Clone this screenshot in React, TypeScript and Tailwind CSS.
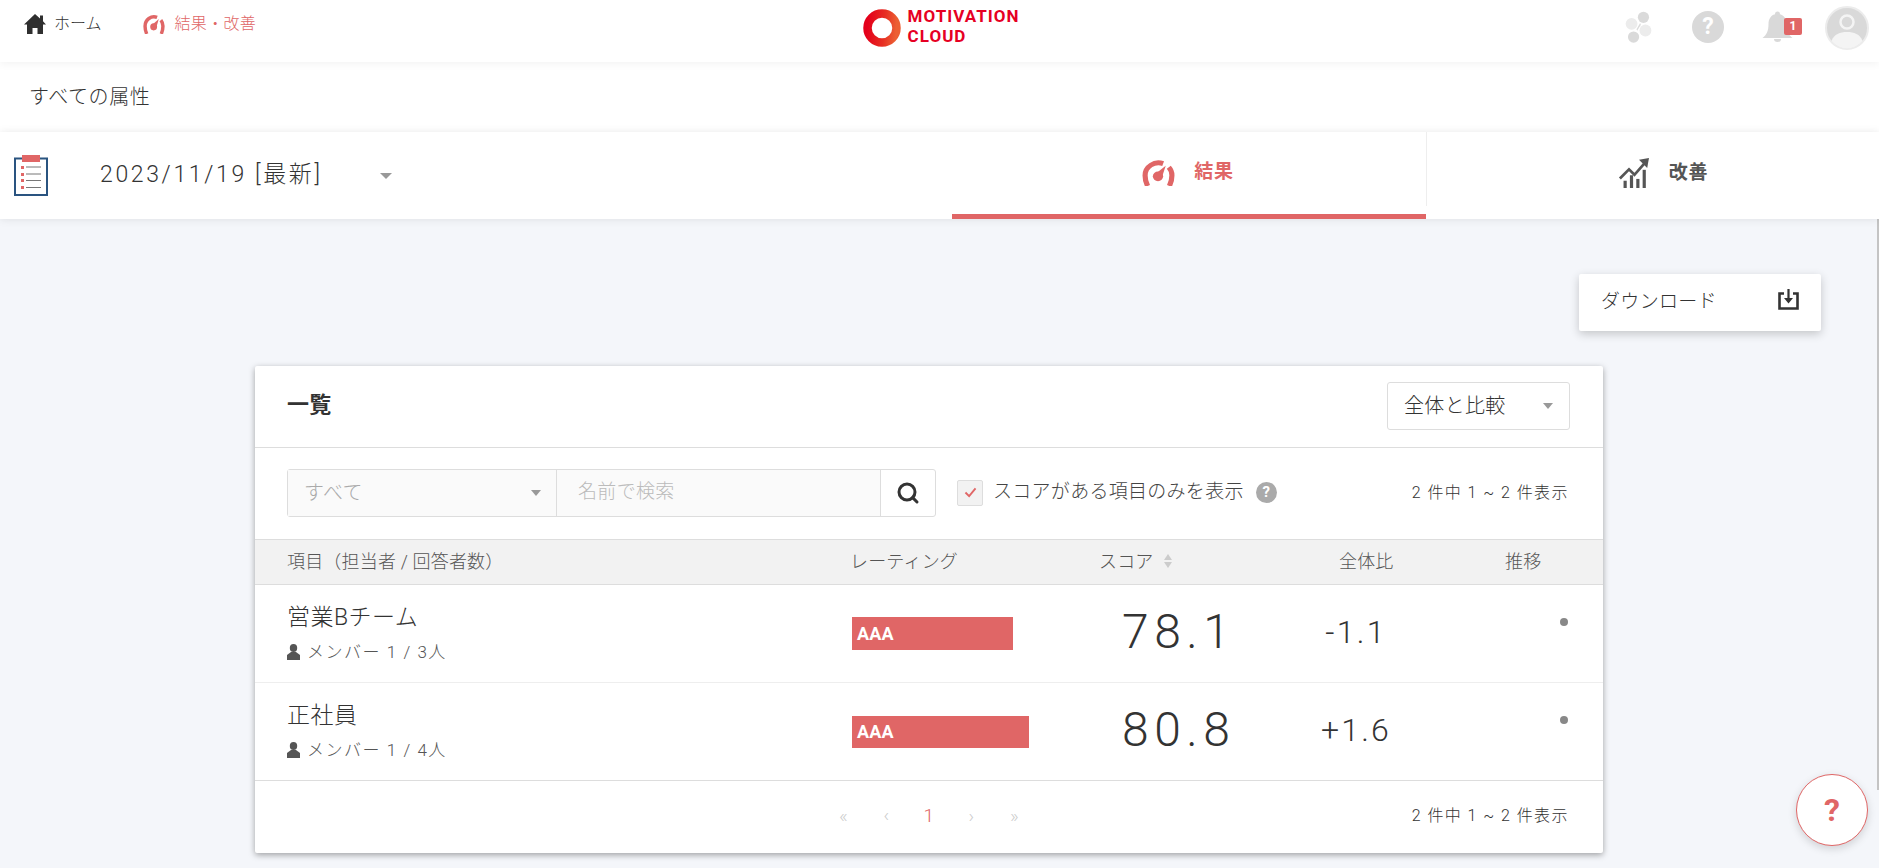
import React from "react";
import { Search } from "lucide-react";

const Gauge = ({ className, color }: { className?: string; color: string }) => (
  <svg viewBox="0 0 32 28" preserveAspectRatio="none" className={className}>
    <path d="M5.500 28 C3.500 24 3 20 3 17 A13 13 0 0 1 20.500 4.800" fill="none" stroke={color} strokeWidth="5" />
    <path d="M26 8.500 A13 13 0 0 1 29 17 C29 20 28.500 24 26.500 28" fill="none" stroke={color} strokeWidth="5" />
    <circle cx="15.500" cy="18" r="5" fill={color} />
    <path d="M13.500 15 L23 7 L19 20 z" fill={color} />
  </svg>
);

const Home = () => (
  <svg viewBox="0 0 22 20" className="w-[22px] h-[20px]">
    <path d="M11 0 L16 4.500 V1.500 H19 V7.200 L22 10.500 L19 10.500 V20 H13.500 V14 H8.500 V20 H3 V10.500 L0 10.500 z" fill="#2f2f2f" />
  </svg>
);

const Molecule = () => (
  <svg viewBox="0 0 80 97" className="w-[27px] h-[32px]">
    <circle cx="55" cy="19" r="17" fill="#dadada" />
    <circle cx="19" cy="39" r="18" fill="#ececec" />
    <circle cx="61" cy="59" r="18" fill="#ececec" />
    <circle cx="25" cy="79" r="17" fill="#dadada" />
    <path d="M34 55 L45 36 L47 42 L36 60 z" fill="#dadada" />
  </svg>
);

const Bell = () => (
  <svg viewBox="0 0 31 31" className="w-[31px] h-[31px]">
    <circle cx="15.500" cy="3" r="2.500" fill="#d9d9d9" />
    <path d="M15.500 3 C9 3 6.500 8 6.500 13 C6.500 20 4.500 24 0.500 27 H30.500 C26.500 24 24.500 20 24.500 13 C24.500 8 22 3 15.500 3 z" fill="#d9d9d9" />
    <path d="M12 28 H19 A3.500 3 0 0 1 12 28 z" fill="#d9d9d9" />
  </svg>
);

const Avatar = () => (
  <svg viewBox="0 0 44 44" className="w-[44px] h-[44px]">
    <circle cx="22" cy="22" r="21" fill="#d9d9d9" stroke="#ececec" strokeWidth="2" />
    <circle cx="22" cy="16" r="6.500" fill="none" stroke="#f4f4f4" strokeWidth="2.500" />
    <path d="M6.500 35 C9 28 15 26 22 26 C29 26 35 28 37.500 35 A20 20 0 0 1 6.500 35 z" fill="#f4f4f4" />
  </svg>
);

const Clipboard = () => (
  <svg viewBox="0 0 34 41" className="w-[34px] h-[41px]">
    <rect x="1" y="3.500" width="32" height="36.500" fill="#fff" stroke="#2a5480" strokeWidth="2" />
    <rect x="8" y="0" width="18" height="7" fill="#e06666" />
    <g fill="#e06666">
      <rect x="7" y="11" width="3" height="3" />
      <rect x="7" y="18" width="3" height="3" />
      <rect x="7" y="24" width="3" height="3" />
      <rect x="7" y="31" width="3" height="3" />
    </g>
    <g stroke="#777" strokeWidth="1">
      <path d="M12 12 H27" />
      <path d="M12 19 H27" />
      <path d="M12 25.500 H27" />
      <path d="M12 32.500 H27" />
    </g>
  </svg>
);

const ChartUp = () => (
  <svg viewBox="0 0 33 33" className="w-[32px] h-[30px]">
    <g fill="#555">
      <rect x="5" y="25" width="3.500" height="8" />
      <rect x="12" y="19" width="3.500" height="14" />
      <rect x="19" y="23" width="3.500" height="10" />
      <rect x="26" y="13" width="3.500" height="20" />
      <path d="M22 2 L33 0 L31 11 z" />
    </g>
    <path d="M1 22.500 L11 12.500 L17 18.500 L28 6" fill="none" stroke="#555" strokeWidth="3" />
  </svg>
);

const DownloadIcon = () => (
  <svg viewBox="0 0 21 21" className="w-[21px] h-[21px] mb-[7px]">
    <path d="M6 4.500 H1.500 V19.500 H19.500 V4.500 H15" fill="none" stroke="#333" strokeWidth="2.600" />
    <path d="M9.400 0 H11.600 V9 H15 L10.500 14.500 L6 9 H9.400 z" fill="#333" />
  </svg>
);

const Person = () => (
  <svg viewBox="0 0 13 16" className="w-[13px] h-[16px] shrink-0">
    <ellipse cx="6.500" cy="4" rx="3.700" ry="4" fill="#555" />
    <path d="M4 8 H9 L13 11 V16 H0 V11 z" fill="#555" />
  </svg>
);

const CaretLarge = ({ className }: { className?: string }) => (
  <div className={`w-0 h-0 border-l-[6px] border-r-[6px] border-t-[6px] border-l-transparent border-r-transparent border-t-[#999] ${className ?? ""}`} />
);

const Caret = () => (
  <div className="w-0 h-0 border-l-[5px] border-r-[5px] border-t-[6px] border-l-transparent border-r-transparent border-t-[#999]" />
);

const rows = [
  { name: "営業Bチーム", sub: "メンバー 1 / 3人", barClass: "w-[161px] h-[33px]", score: "78.1", diff: "-1.1" },
  { name: "正社員", sub: "メンバー 1 / 4人", barClass: "w-[177px] h-[32px]", score: "80.8", diff: "+1.6" },
];

export default function App() {
  return (
    <div className="relative h-[868px] overflow-hidden bg-[#f4f6fa] text-[#333] font-light tracking-[0.02em] font-['Roboto','Noto_Sans_CJK_JP',sans-serif]">
      {/* top nav */}
      <header className="relative z-20 h-[62px] bg-white shadow-[0_2px_8px_rgba(0,0,0,0.05)] flex items-start">
        <div className="flex-1 flex items-center h-[47px] pl-[24px]">
          <Home />
          <span className="ml-[8px] text-[16px] tracking-normal">ホーム</span>
          <Gauge className="ml-[41px] w-[22px] h-[20px]" color="#e06666" />
          <span className="ml-[10px] text-[16px] tracking-[0.02em] text-[#e06666]">結果・改善</span>
        </div>
        <div className="flex items-center gap-[7px] pt-[6px] pr-[11px]">
          <svg viewBox="0 0 38 38" className="w-[38px] h-[38px]">
            <defs>
              <linearGradient id="ring" x1="0" y1="0.3" x2="1" y2="0.4">
                <stop offset="0" stopColor="#e4001b" />
                <stop offset="0.6" stopColor="#e72f22" />
                <stop offset="1" stopColor="#ec5f33" />
              </linearGradient>
            </defs>
            <circle cx="19" cy="19" r="14.500" fill="none" stroke="url(#ring)" strokeWidth="8.500" />
          </svg>
          <div className="text-[#e60023] font-bold text-[17px] leading-[20px] tracking-[0.06em] pb-[4px] font-['Roboto',sans-serif]">
            <div>MOTIVATION</div>
            <div>CLOUD</div>
          </div>
        </div>
        <div className="flex-1 flex justify-end pt-[6px] pr-[10px]">
          <div className="mt-[5px]"><Molecule /></div>
          <div className="ml-[40px] mt-[5px] w-[32px] h-[32px] rounded-full bg-[#d9d9d9] text-white font-bold text-[23px] leading-[32px] text-center tracking-normal">?</div>
          <div className="relative ml-[38px] mt-[5px] w-[31px]">
            <Bell />
            <span className="absolute left-[22px] top-[7px] w-[18px] h-[17px] rounded-[2px] bg-[#e06666] text-white text-[12px] font-bold leading-[17px] text-center tracking-normal">1</span>
          </div>
          <div className="ml-[32px]"><Avatar /></div>
        </div>
      </header>

      {/* attribute bar */}
      <div className="h-[70px] bg-white flex items-center pl-[29px] text-[20px] tracking-[0.03em]">すべての属性</div>

      {/* tab bar */}
      <div className="relative z-10 h-[87px] bg-white shadow-[0_-2px_8px_rgba(0,0,0,0.04),0_2px_8px_rgba(0,0,0,0.06)] flex">
        <div className="w-[952px] flex items-center pl-[14px]">
          <Clipboard />
          <span className="ml-[52px] text-[23px] tracking-[0.115em]">2023/11/19 [最新]</span>
          <CaretLarge className="ml-[57px]" />
        </div>
        <div className="w-[474px] border-b-[5px] border-[#e06666] flex items-center justify-center gap-[19px] text-[#e06666] font-bold text-[19px] tracking-[0.04em] pb-[2px]">
          <Gauge className="w-[33px] h-[27px] -ml-[2px]" color="#e06666" />
          <span>結果</span>
        </div>
        <div className="w-px h-[74px] bg-[#eee]" />
        <div className="flex-1 flex items-center justify-center gap-[19px] text-[#555] font-bold text-[19px] tracking-[0.04em] pl-[20px] pb-[5px]">
          <ChartUp />
          <span>改善</span>
        </div>
      </div>

      {/* download */}
      <div className="flex justify-end pr-[58px] pt-[55px]">
        <div className="w-[242px] h-[57px] bg-white rounded-[2px] shadow-[0_3px_10px_rgba(0,0,0,0.2)] flex items-center justify-between pl-[22px] pr-[22px]">
          <span className="text-[19px]">ダウンロード</span>
          <DownloadIcon />
        </div>
      </div>

      {/* card */}
      <section className="ml-[255px] mt-[35px] w-[1348px] h-[487px] bg-white shadow-[0_2px_6px_rgba(0,0,0,0.35)] rounded-[2px] flex flex-col">
        <div className="h-[82px] border-b border-[#ddd] flex items-center justify-between pl-[32px] pr-[33px] pb-[2px] shrink-0">
          <h2 className="text-[22px] font-bold pb-[2px]">一覧</h2>
          <div className="w-[183px] h-[48px] rounded-[3px] border border-[#ddd] flex items-center justify-between pl-[16px] pr-[16px]">
            <span className="text-[20px]">全体と比較</span>
            <Caret />
          </div>
        </div>

        <div className="h-[92px] flex items-center pl-[32px] pr-[34px] pb-[2px] shrink-0 border-b border-[#ddd]">
          <div className="flex h-[48px] w-[649px] rounded-[3px] border border-[#ddd]">
            <div className="w-[269px] bg-[#fafafa] border-r border-[#ddd] flex items-center justify-between pl-[16px] pr-[15px] text-[20px] text-[#aaa]">
              <span>すべて</span>
              <Caret />
            </div>
            <div className="w-[323px] bg-[#fafafa] flex items-center pl-[21px] text-[19px] text-[#bbb]">名前で検索</div>
            <div className="flex-1 border-l border-[#ddd] flex items-center justify-center">
              <Search size={24} strokeWidth={3} color="#333" />
            </div>
          </div>
          <div className="ml-[21px] w-[26px] h-[26px] rounded-[2px] border border-[#ddd] bg-[#f2f2f2] flex items-center justify-center">
            <svg viewBox="0 0 14 12" className="w-[13px] h-[11px]">
              <path d="M1.500 6 L5.500 10 L12.500 1.500" fill="none" stroke="#e06666" strokeWidth="2" />
            </svg>
          </div>
          <span className="ml-[10px] text-[19px] tracking-[0.015em] text-[#444]">スコアがある項目のみを表示</span>
          <div className="ml-[12px] w-[21px] h-[21px] rounded-full bg-[#aaa] text-white text-[15px] font-bold leading-[21px] text-center tracking-normal">?</div>
          <span className="ml-auto text-[16px] tracking-[0.09em]">2 件中 1 ~ 2 件表示</span>
        </div>

        <div className="h-[45px] bg-[#f2f2f2] border-b border-[#ddd] shrink-0 grid grid-cols-[563px_249px_240px_166px_1fr] items-center pl-[32px] pb-[2px] text-[18px] tracking-[0.01em] text-[#555]">
          <div>項目（担当者 / 回答者数）</div>
          <div>レーティング</div>
          <div className="flex items-center gap-[10px]">
            <span>スコア</span>
            <div className="flex flex-col gap-[2px]">
              <div className="w-0 h-0 border-l-[4px] border-r-[4px] border-b-[6px] border-l-transparent border-r-transparent border-b-[#ccc]" />
              <div className="w-0 h-0 border-l-[4px] border-r-[4px] border-t-[6px] border-l-transparent border-r-transparent border-t-[#ccc]" />
            </div>
          </div>
          <div>全体比</div>
          <div>推移</div>
        </div>

        {rows.map((r, i) => (
          <div key={r.name} className={`h-[98px] shrink-0 grid grid-cols-[565px_247px_200px_108px_1fr] items-center pl-[32px] ${i === 0 ? "border-b border-[#eee]" : "border-b border-[#ddd]"}`}>
            <div className="pb-[1px]">
              <div className="text-[23px] leading-[28px] tracking-[0.02em]">{r.name}</div>
              <div className="mt-[10px] flex items-center gap-[7px] text-[17px] tracking-[0.09em] text-[#555] leading-[20px]">
                <Person />
                <span>{r.sub}</span>
              </div>
            </div>
            <div>
              <div className={`${r.barClass} bg-[#e06666] text-white font-bold text-[18px] tracking-[0.01em] flex items-center pl-[5px]`}>AAA</div>
            </div>
            <div className="pl-[23px] text-[48px] tracking-[0.115em] font-light leading-none pb-[4px]">{r.score}</div>
            <div className="text-center text-[32px] tracking-[0.07em] font-light leading-none pb-[3px] pl-[6px]">{r.diff}</div>
            <div className="flex justify-end pr-[35px] self-start pt-[33px]">
              <div className="w-[8px] h-[8px] rounded-full bg-[#888]" />
            </div>
          </div>
        ))}

        <div className="flex-1 flex items-center pl-[567px] pr-[34px] pb-[2px]">
          <div className="flex text-[19px] text-[#ccc]">
            <span className="w-[43px] text-center">«</span>
            <span className="w-[43px] text-center">‹</span>
            <span className="w-[42px] text-center text-[#e06666]">1</span>
            <span className="w-[43px] text-center">›</span>
            <span className="w-[43px] text-center">»</span>
          </div>
          <span className="ml-auto text-[16px] tracking-[0.09em]">2 件中 1 ~ 2 件表示</span>
        </div>
      </section>

      {/* scrollbar edge */}
      <div className="absolute right-0 top-[219px] h-[571px] w-[2px] bg-[#c4c4c4]" />

      {/* floating help */}
      <div className="absolute left-[1796px] top-[774px] w-[72px] h-[72px] rounded-full bg-white border border-[#e06666] shadow-[0_3px_8px_rgba(0,0,0,0.15)] flex items-center justify-center text-[#e06666] text-[32px] font-bold tracking-normal">?</div>
    </div>
  );
}
